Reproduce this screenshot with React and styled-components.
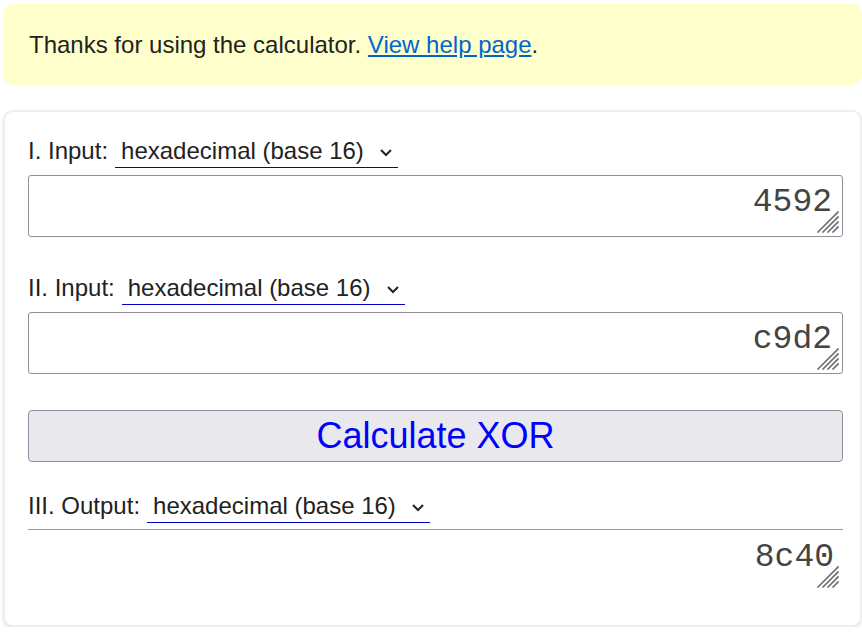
import React from "react";
import styled, { createGlobalStyle } from "styled-components";

const Global = createGlobalStyle`
  html, body { margin: 0; padding: 0; background: #fff; overflow: hidden; }
  body { font-family: Arial, "Liberation Sans", sans-serif; color: #222; }
`;

const Page = styled.div`
  padding: 4px 0 0 3px;
  width: 859px;
`;

const Notice = styled.div`
  background: #ffffcc;
  border-radius: 10px;
  height: 81px;
  padding: 0 26px;
  display: flex;
  align-items: center;
  font-size: 24px;
  color: #222;
  box-sizing: border-box;
`;

const HelpLink = styled.a`
  color: #0066cc;
  text-decoration: underline;
`;

const Card = styled.div`
  margin-top: 25px;
  border: 2px solid #eeeeee;
  border-radius: 10px;
  box-shadow: 0 2px 3px rgba(0, 0, 0, 0.12);
  padding: 25px 17px 33px 23px;
  display: flex;
  flex-direction: column;
`;

const Row = styled.div`
  display: flex;
  align-items: flex-end;
  height: 31px;
  margin-top: ${(p) => p.$top || 0}px;
  font-size: 24px;
  color: #222;
`;

const Label = styled.span`
  padding-bottom: 3px;
  margin-right: 7px;
`;

const SelectWrap = styled.span`
  position: relative;
  display: inline-flex;
  border-bottom: 1px solid #0000cc;
`;

const Select = styled.select`
  appearance: none;
  -webkit-appearance: none;
  border: none;
  background: transparent;
  font-family: Arial, "Liberation Sans", sans-serif;
  font-size: 24px;
  color: #222;
  padding: 0 34px 2px 6px;
  height: 31px;
  outline: none;
`;

const Chevron = styled.svg`
  position: absolute;
  right: 5px;
  top: 12px;
  pointer-events: none;
`;

const Field = styled.div`
  position: relative;
  margin-top: ${(p) => p.$top}px;
  width: 815px;
`;

const Box = styled.textarea`
  display: block;
  width: 100%;
  height: ${(p) => p.$h}px;
  box-sizing: border-box;
  border: 1px solid #8f8f9d;
  border-radius: 3px;
  font-family: "Liberation Mono", "Courier New", monospace;
  font-size: 33px;
  color: #444;
  text-align: right;
  padding: 9px 10px 0 10px;
  resize: none;
  overflow: hidden;
  line-height: 1.1;
  outline: none;
`;

const OutBox = styled(Box)`
  border: none;
  border-top: 1px solid #999;
  border-radius: 0;
  padding: 10px 9px 0 10px;
`;

const Grip = styled.svg`
  position: absolute;
  right: 4px;
  bottom: 4px;
  pointer-events: none;
`;

const Button = styled.button`
  margin-top: 36px;
  width: 815px;
  height: 52px;
  background: #e9e9ed;
  border: 1px solid #8f8f9d;
  border-radius: 4px;
  color: #0000ff;
  font-family: Arial, "Liberation Sans", sans-serif;
  font-size: 36px;
  padding: 0;
`;

const Base = () => (
  <SelectWrap>
    <Select defaultValue="16">
      <option value="16">hexadecimal (base 16)</option>
    </Select>
    <Chevron width="14" height="9" viewBox="0 0 14 9">
      <path d="M2 2 L7 7 L12 2" fill="none" stroke="#222" strokeWidth="2" />
    </Chevron>
  </SelectWrap>
);

const ResizeGrip = () => (
  <Grip width="22" height="22" viewBox="0 0 22 22">
    <g stroke="#6e6e6e" strokeWidth="1.6" strokeLinecap="square">
      <line x1="1" y1="21" x2="21" y2="1" />
      <line x1="6" y1="21" x2="21" y2="6" />
      <line x1="11" y1="21" x2="21" y2="11" />
      <line x1="16" y1="21" x2="21" y2="16" />
    </g>
  </Grip>
);

export default function App() {
  return (
    <Page>
      <Global />
      <Notice>
        <span>
          Thanks for using the calculator. <HelpLink href="#">View help page</HelpLink>.
        </span>
      </Notice>
      <Card>
        <Row>
          <Label>I. Input:</Label>
          <Base />
        </Row>
        <Field $top={7}>
          <Box $h={62} defaultValue="4592" spellCheck={false} />
          <ResizeGrip />
        </Field>
        <Row $top={37}>
          <Label>II. Input:</Label>
          <Base />
        </Row>
        <Field $top={7}>
          <Box $h={62} defaultValue="c9d2" spellCheck={false} />
          <ResizeGrip />
        </Field>
        <Button>Calculate XOR</Button>
        <Row $top={30}>
          <Label>III. Output:</Label>
          <Base />
        </Row>
        <Field $top={6}>
          <OutBox $h={63} defaultValue="8c40" readOnly spellCheck={false} />
          <ResizeGrip />
        </Field>
      </Card>
    </Page>
  );
}
